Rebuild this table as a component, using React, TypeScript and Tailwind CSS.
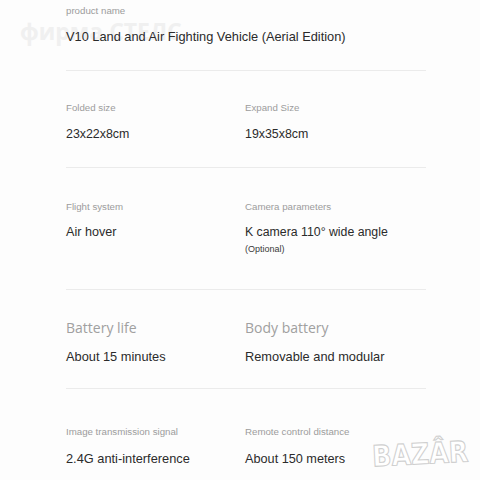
import React from "react";

const sans = { fontFamily: '"Liberation Sans", Arial, sans-serif' };
const open = { fontFamily: '"Open Sans", "Noto Sans", sans-serif' };

function Label({ children }: { children: React.ReactNode }) {
  return <div className="text-[9.7px] leading-[14px] text-[#9c9c9c]">{children}</div>;
}

export default function App() {
  return (
    <div
      className="relative w-[480px] h-[480px] overflow-hidden bg-[#fdfdfd]"
      style={sans}
    >
      <div
        className="absolute left-[20px] top-[15px] text-[23px] font-bold leading-[32px] text-[#f0f0f0] select-none"
        style={open}
      >
        фирма СТЕЛС
      </div>

      <div className="relative ml-[66px] w-[360px] flex flex-col">
        {/* Row 1 */}
        <div className="pt-[4px] pb-[23px] border-b border-[#ebebeb]">
          <Label>product name</Label>
          <div className="mt-[9px] text-[12.8px] leading-[20px] text-[#2b2b2b]">
            V10 Land and Air Fighting Vehicle (Aerial Edition)
          </div>
        </div>

        {/* Row 2 */}
        <div className="pt-[30px] pb-[23px] border-b border-[#ebebeb] grid grid-cols-[179px_1fr]">
          <div>
            <Label>Folded size</Label>
            <div className="mt-[9px] text-[12.4px] leading-[20px] text-[#2b2b2b]">23x22x8cm</div>
          </div>
          <div>
            <Label>Expand Size</Label>
            <div className="mt-[9px] text-[12.4px] leading-[20px] text-[#2b2b2b]">19x35x8cm</div>
          </div>
        </div>

        {/* Row 3 */}
        <div className="pt-[32px] pb-[34px] border-b border-[#ebebeb] grid grid-cols-[179px_1fr] items-start">
          <div>
            <Label>Flight system</Label>
            <div className="mt-[8px] text-[12.6px] leading-[20px] text-[#2b2b2b]">Air hover</div>
          </div>
          <div>
            <Label>Camera parameters</Label>
            <div className="mt-[8px] text-[12.3px] leading-[20px] text-[#2b2b2b]">K camera 110° wide angle</div>
            <div className="mt-[1px] text-[9px] leading-[12px] text-[#3a3a3a]">(Optional)</div>
          </div>
        </div>

        {/* Row 4 */}
        <div className="pt-[28px] pb-[22px] border-b border-[#ebebeb] grid grid-cols-[179px_1fr]">
          <div>
            <div className="text-[14px] leading-[20px] text-[#a0a0a0]" style={open}>
              Battery life
            </div>
            <div className="mt-[10px] text-[12.8px] leading-[18px] text-[#2b2b2b]">About 15 minutes</div>
          </div>
          <div>
            <div className="text-[14px] leading-[20px] text-[#a0a0a0]" style={open}>
              Body battery
            </div>
            <div className="mt-[10px] text-[12.8px] leading-[18px] text-[#2b2b2b]">Removable and modular</div>
          </div>
        </div>

        {/* Row 5 */}
        <div className="pt-[36px] grid grid-cols-[179px_1fr]">
          <div>
            <Label>Image transmission signal</Label>
            <div className="mt-[10px] text-[12.8px] leading-[20px] text-[#2b2b2b]">2.4G anti-interference</div>
          </div>
          <div>
            <Label>Remote control distance</Label>
            <div className="mt-[10px] text-[12.7px] leading-[20px] text-[#2b2b2b]">About 150 meters</div>
          </div>
        </div>
      </div>

      {/* BAZAR watermark logo */}
      <svg
        className="absolute left-[366px] top-[420px]"
        width="112"
        height="58"
        viewBox="0 0 112 58"
      >
        <text
          x="6"
          y="44"
          fontFamily='"DejaVu Sans", sans-serif'
          fontWeight="bold"
          fontSize="29"
          fill="#ffffff"
          stroke="#cfcfcf"
          strokeWidth="1.1"
          textLength="96"
          lengthAdjust="spacingAndGlyphs"
          transform="rotate(-3 56 30)"
        >
          BAZÂR
        </text>
      </svg>
    </div>
  );
}
